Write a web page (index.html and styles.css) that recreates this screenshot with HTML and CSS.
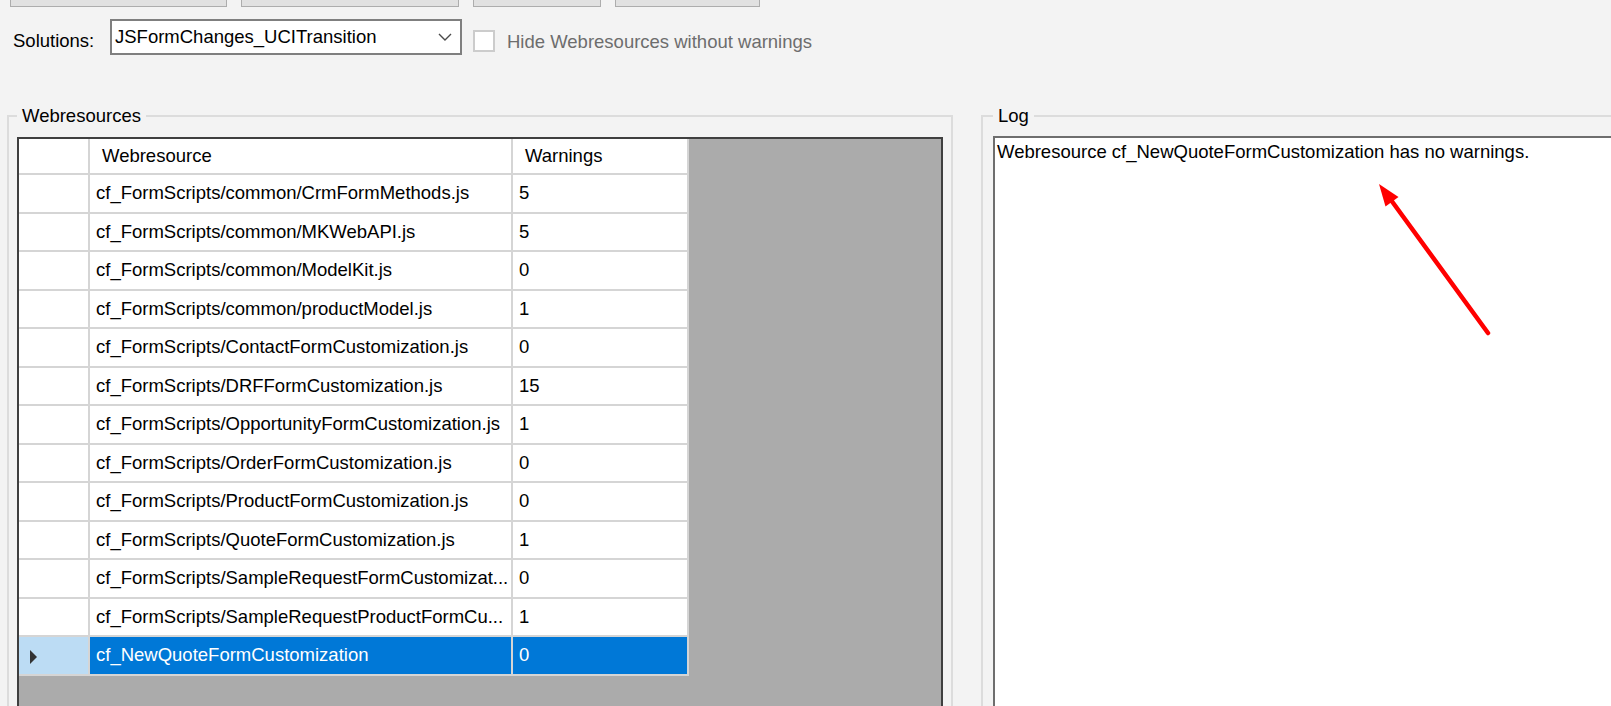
FILE: index.html
```html
<!DOCTYPE html>
<html lang="en">
<head>
  <meta charset="UTF-8">
  <meta name="viewport" content="width=device-width, initial-scale=1.0">
  <link rel="stylesheet" href="styles.css">
  <title>Webresource Warnings</title>
</head>
<body>

  <div class="toolbar">
    <div class="tool-btn btn-a"></div>
    <div class="tool-btn btn-b"></div>
    <div class="tool-btn btn-c"></div>
    <div class="tool-btn btn-d"></div>
  </div>

  <div class="options">
    <label class="opt-label">Solutions:</label>
    <div class="combo">
      <span class="combo-text">JSFormChanges_UCITransition</span>
      <svg class="combo-arrow" width="14" height="8" viewBox="0 0 14 8">
        <polyline points="1,1 7,7 13,1" fill="none" stroke="#4a4a4a" stroke-width="1.4"/>
      </svg>
    </div>
    <span class="check"></span>
    <span class="check-label">Hide Webresources without warnings</span>
  </div>

  <div class="panels">
    <fieldset class="group group-res">
      <legend>Webresources</legend>
      <div class="grid-host">
        <div class="grid">
          <div class="rh"></div><div class="hd">Webresource</div><div class="hd">Warnings</div>

          <div class="rh"></div><div class="cell">cf_FormScripts/common/CrmFormMethods.js</div><div class="cell">5</div>
          <div class="rh"></div><div class="cell">cf_FormScripts/common/MKWebAPI.js</div><div class="cell">5</div>
          <div class="rh"></div><div class="cell">cf_FormScripts/common/ModelKit.js</div><div class="cell">0</div>
          <div class="rh"></div><div class="cell">cf_FormScripts/common/productModel.js</div><div class="cell">1</div>
          <div class="rh"></div><div class="cell">cf_FormScripts/ContactFormCustomization.js</div><div class="cell">0</div>
          <div class="rh"></div><div class="cell">cf_FormScripts/DRFFormCustomization.js</div><div class="cell">15</div>
          <div class="rh"></div><div class="cell">cf_FormScripts/OpportunityFormCustomization.js</div><div class="cell">1</div>
          <div class="rh"></div><div class="cell">cf_FormScripts/OrderFormCustomization.js</div><div class="cell">0</div>
          <div class="rh"></div><div class="cell">cf_FormScripts/ProductFormCustomization.js</div><div class="cell">0</div>
          <div class="rh"></div><div class="cell">cf_FormScripts/QuoteFormCustomization.js</div><div class="cell">1</div>
          <div class="rh"></div><div class="cell">cf_FormScripts/SampleRequestFormCustomizat...</div><div class="cell">0</div>
          <div class="rh"></div><div class="cell">cf_FormScripts/SampleRequestProductFormCu...</div><div class="cell">1</div>
          <div class="rh rh-current"><span class="row-marker"></span></div><div class="cell selected">cf_NewQuoteFormCustomization</div><div class="cell selected">0</div>
        </div>
      </div>
    </fieldset>

    <fieldset class="group group-log">
      <legend>Log</legend>
      <div class="log-box">
        Webresource cf_NewQuoteFormCustomization has no warnings.
        <!-- annotation arrow drawn over the log -->
        <svg class="annotation" width="600" height="300" viewBox="0 0 600 300">
          <line x1="493" y1="195" x2="396" y2="62" stroke="#ff0000" stroke-width="4.5" stroke-linecap="round"/>
          <polygon points="384,46 403.5,59 390.5,68.5" fill="#ff0000"/>
        </svg>
      </div>
    </fieldset>
  </div>

</body>
</html>
```

FILE: styles.css
```css
body {
  font-family: "Liberation Sans", Arial, sans-serif;
  font-size: 18.5px;
  line-height: 22px;
  color: #000;
  background-color: #f3f3f3;
  margin: 0;
  padding: 0;
  width: 1611px;
  height: 706px;
  overflow: hidden;
}

.toolbar {
  display: flex;
  gap: 14px;
  padding-left: 10px;
  height: 7px;
}

.tool-btn {
  height: 6px;
  background-color: #e1e1e1;
  border: 1px solid #adadad;
  border-top: none;
}

.btn-a { width: 215px; }
.btn-b { width: 216px; }
.btn-c { width: 126px; }
.btn-d { width: 143px; }

.options {
  display: flex;
  align-items: flex-start;
  margin-top: 12px;
  padding-left: 13px;
  height: 36px;
}

.opt-label {
  width: 97px;
  margin-top: 11px;
}

.combo {
  box-sizing: border-box;
  width: 352px;
  height: 36px;
  background-color: #fff;
  border: 2px solid #7f7f7f;
  display: flex;
  align-items: center;
  justify-content: space-between;
  padding: 0 8px 0 3px;
}

.check {
  box-sizing: border-box;
  width: 22px;
  height: 22px;
  margin: 11px 0 0 11px;
  background-color: #fff;
  border: 2px solid #cccccc;
}

.check-label {
  margin: 12px 0 0 12px;
  color: #6d6d6d;
}

.panels {
  display: flex;
  gap: 28px;
  margin-top: 50px;
  padding-left: 7px;
}

.group {
  box-sizing: border-box;
  margin: 0;
  min-inline-size: 0;
  height: 700px;
  border: 2px solid #dcdcdc;
  padding: 9px 8px 0 8px;
  flex-shrink: 0;
}

.group legend {
  padding: 0 5px;
  line-height: 22px;
}

.group-res {
  width: 946px;
}

.group-log {
  width: 760px;
  padding-left: 10px;
}

.grid-host {
  height: 600px;
  margin-top: 1px;
  background-color: #ababab;
  border: 2px solid #3f3f3f;
}

.grid {
  display: grid;
  grid-template-columns: 71px 423px 176px;
  grid-template-rows: 36px repeat(13, 38.5px);
  width: 670px;
}

.grid > div {
  box-sizing: border-box;
  background-color: #fff;
  border-right: 2px solid #d5d5d5;
  border-bottom: 2px solid #d5d5d5;
  display: flex;
  align-items: center;
  white-space: nowrap;
  overflow: hidden;
}

.grid .hd {
  padding-left: 12px;
}

.grid .cell {
  padding-left: 6px;
}

.grid .rh-current {
  background-color: #bcdcf4;
  padding-left: 11px;
}

.row-marker {
  width: 0;
  height: 0;
  margin-top: 3px;
  border-top: 7px solid transparent;
  border-bottom: 7px solid transparent;
  border-left: 7px solid #333;
}

.grid .selected {
  background-color: #0078d7;
  color: #fff;
}

.log-box {
  position: relative;
  box-sizing: border-box;
  height: 600px;
  background-color: #fff;
  border-top: 2px solid #6e6e6e;
  border-left: 2px solid #6e6e6e;
  padding: 3px 2px;
}

.annotation {
  position: absolute;
  left: 0;
  top: 0;
  overflow: visible;
}
```
